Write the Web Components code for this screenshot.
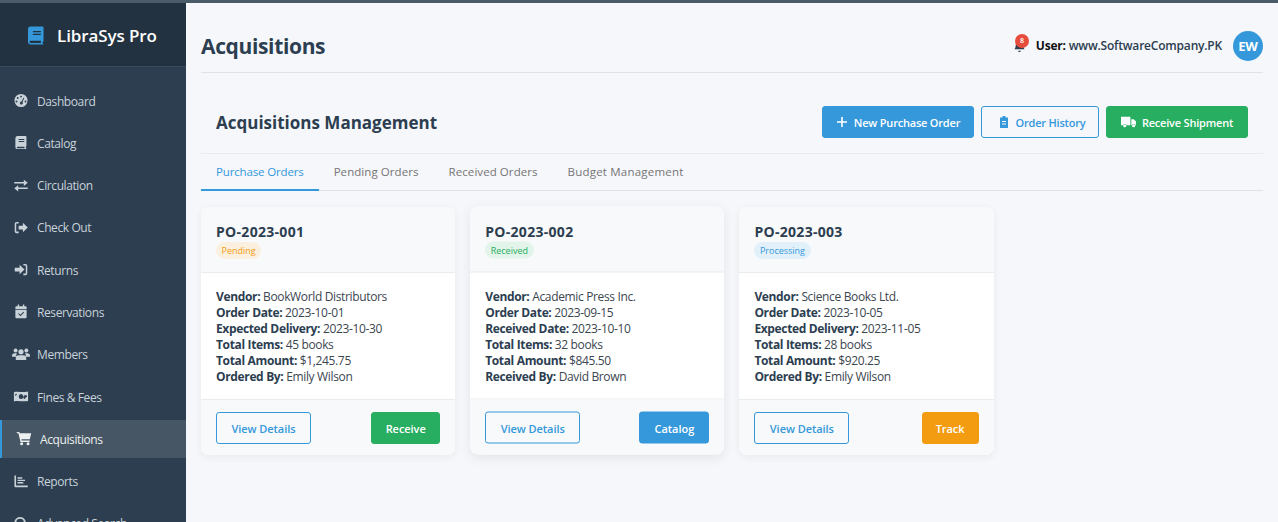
<!DOCTYPE html>
<html>
<head>
<meta charset="utf-8">
<title>LibraSys Pro</title>
<style>
  html, body { margin: 0; height: 522px; overflow: hidden; }
  body { font-family: "Open Sans", "Noto Sans", sans-serif; background: #f5f7fb; color: #2c3e50; }
</style>
</head>
<body>
<app-shell>
  <side-bar slot="side">
    <nav-item icon="gauge">Dashboard</nav-item>
    <nav-item icon="book">Catalog</nav-item>
    <nav-item icon="swap">Circulation</nav-item>
    <nav-item icon="out">Check Out</nav-item>
    <nav-item icon="in">Returns</nav-item>
    <nav-item icon="calendar">Reservations</nav-item>
    <nav-item icon="users">Members</nav-item>
    <nav-item icon="money">Fines &amp; Fees</nav-item>
    <nav-item icon="cart" active>Acquisitions</nav-item>
    <nav-item icon="chart">Reports</nav-item>
    <nav-item icon="search">Advanced Search</nav-item>
  </side-bar>
  <page-head title="Acquisitions"></page-head>
  <section-head></section-head>
  <tab-bar>
    <tab-item active style="letter-spacing:-.15px">Purchase Orders</tab-item>
    <tab-item style="letter-spacing:.07px">Pending Orders</tab-item>
    <tab-item style="letter-spacing:.07px">Received Orders</tab-item>
    <tab-item style="letter-spacing:.2px">Budget Management</tab-item>
  </tab-bar>
  <card-grid>
    <order-card number="PO-2023-001" status="Pending" tone="pending" action="Receive" action-tone="green">
      <order-line label="Vendor">BookWorld Distributors</order-line>
      <order-line label="Order Date">2023-10-01</order-line>
      <order-line label="Expected Delivery">2023-10-30</order-line>
      <order-line label="Total Items">45 books</order-line>
      <order-line label="Total Amount">$1,245.75</order-line>
      <order-line label="Ordered By">Emily Wilson</order-line>
    </order-card>
    <order-card number="PO-2023-002" status="Received" tone="received" action="Catalog" action-tone="blue" lifted>
      <order-line label="Vendor">Academic Press Inc.</order-line>
      <order-line label="Order Date">2023-09-15</order-line>
      <order-line label="Received Date">2023-10-10</order-line>
      <order-line label="Total Items">32 books</order-line>
      <order-line label="Total Amount">$845.50</order-line>
      <order-line label="Received By">David Brown</order-line>
    </order-card>
    <order-card number="PO-2023-003" status="Processing" tone="processing" action="Track" action-tone="orange">
      <order-line label="Vendor">Science Books Ltd.</order-line>
      <order-line label="Order Date">2023-10-05</order-line>
      <order-line label="Expected Delivery">2023-11-05</order-line>
      <order-line label="Total Items">28 books</order-line>
      <order-line label="Total Amount">$920.25</order-line>
      <order-line label="Ordered By">Emily Wilson</order-line>
    </order-card>
  </card-grid>
</app-shell>

<script>
const icons = {
  gauge: '<svg viewBox="0 0 16 16"><path fill-rule="evenodd" d="M8 1a7 7 0 1 1 0 14a7 7 0 0 1 0-14zM8 2.800a1 1 0 1 0 0 2a1 1 0 0 0 0-2zM4.500 4.300a1 1 0 1 0 0 2a1 1 0 0 0 0-2zM3.200 8a1 1 0 1 0 0 2a1 1 0 0 0 0-2zM12.800 8a1 1 0 1 0 0 2a1 1 0 0 0 0-2zM10.600 5L8.500 9.100a1.600 1.600 0 1 0 1.100.5l1.900-4.200z"/></svg>',
  book: '<svg viewBox="0 0 16 16"><path fill-rule="evenodd" d="M4 1h8.800a1 1 0 0 1 1 1v9.500a1 1 0 0 1-.6.9v1.600h.2a.5.5 0 0 1 0 1H4a2 2 0 0 1-2-2V3.500A2.500 2.500 0 0 1 4 1zM5.500 4.200v1h6v-1zM5.500 6.500v1h6v-1zM4 12.500a1 1 0 0 0 0 1.500h7.700v-1.500z"/></svg>',
  swap: '<svg viewBox="0 0 16 16"><path d="M.8 4.200h10.200V1.800l4.200 3.300l-4.200 3.300V5.900H.8zM15.200 10H5V7.700l-4.200 3.300l4.200 3.300v-2.500h10.200z"/></svg>',
  out: '<svg viewBox="0 0 16 16"><path d="M5.500 2H3.300A2 2 0 0 0 1.300 4v8a2 2 0 0 0 2 2h2.200v-1.700H3.300a.4.400 0 0 1-.4-.4V4.100a.4.400 0 0 1 .4-.4h2.200zM10 3L15.200 8L10 13V10H5.500V6H10z"/></svg>',
  in: '<svg viewBox="0 0 16 16"><path d="M10.500 2h2.200a2 2 0 0 1 2 2v8a2 2 0 0 1-2 2h-2.200v-1.700h2.200a.4.400 0 0 0 .4-.4V4.100a.4.400 0 0 0-.4-.4h-2.200zM6.500 3L11.700 8L6.500 13V10H1.300V6h5.200z"/></svg>',
  calendar: '<svg viewBox="0 0 16 16"><path fill-rule="evenodd" d="M4.500.5h1.500v2h4v-2h1.500v2h1.500a1 1 0 0 1 1 1V5.300H2V3.500a1 1 0 0 1 1-1h1.500zM2 6.200h12V14a1.200 1.200 0 0 1-1.200 1.200H3.200A1.200 1.200 0 0 1 2 14zM10.600 8.300l-3.200 3.200L5.600 9.800l-.7.700l2.500 2.500l3.900-3.900z"/></svg>',
  users: '<svg viewBox="0 0 20 16"><circle cx="4" cy="3.500" r="2.200"/><circle cx="16" cy="3.500" r="2.200"/><circle cx="10" cy="5" r="2.900"/><path d="M0 9.500a3 3 0 0 1 3-3h2l.6.5A4 4 0 0 0 4.500 10.500H0zM14.400 7l.6-.5h2a3 3 0 0 1 3 3v1h-4.500a4 4 0 0 0-1.100-3.500zM7 8.800h6a2.800 2.800 0 0 1 2.800 2.800V14H4.200v-2.400A2.800 2.800 0 0 1 7 8.800z"/></svg>',
  money: '<svg viewBox="-1 -1 20 18"><path fill-rule="evenodd" d="M.5 2.800c4-1.500 9 1 17-.7v11.200c-6 1.500-12-1-17 .7zM9 5a2.700 3 0 1 0 0 6a2.700 3 0 0 0 0-6zM2.800 4.800a1.500 1.500 0 0 1-1 1v1.400a2.500 2.500 0 0 0 2.400-2.200zM13.800 11a2.500 2.500 0 0 1 2.400-2.300V7.300a2.500 2.500 0 0 0-3.800 3.500z"/></svg>',
  cart: '<svg viewBox="0 0 16 16"><path d="M.3 1h2.700l.4 1.500H15.700l-1.500 6.300H5.200l.3 1.400h8.500v1.400H4.300L2 2.300H.3z"/><circle cx="5.500" cy="13.700" r="1.600"/><circle cx="12.300" cy="13.700" r="1.600"/></svg>',
  chart: '<svg viewBox="0 0 16 16"><path d="M1 1.500h1.700v10.800h12.500V14H2a1 1 0 0 1-1-1zM4.300 3.500h5V5h-5zM4.300 6h8v1.500h-8zM4.300 8.500h6.200V10H4.300z"/></svg>',
  search: '<svg viewBox="0 0 16 16"><path fill-rule="evenodd" d="M7 1a6 6 0 0 1 4.800 9.600l3.400 3.400l-1.300 1.300l-3.400-3.400A6 6 0 1 1 7 1zM7 3a4 4 0 1 0 0 8a4 4 0 0 0 0-8z"/></svg>'
};

function define(name, css, html) {
  customElements.define(name, class extends HTMLElement {
    connectedCallback() {
      if (this.shadowRoot) return;
      const root = this.attachShadow({ mode: 'open' });
      root.innerHTML = `<style>${css}</style>${typeof html === 'function' ? html(this) : html}`;
    }
  });
}

define('app-shell', `
  :host { display: block; height: 522px; overflow: hidden; }
  .strip { height: 3px; background: #4a5c68; }
  .wrap { display: flex; height: 519px; }
  .side { width: 186px; flex: none; height: 519px; overflow: hidden; }
  main { flex: 1; min-width: 0; padding: 0 15px; }
`, `<div class="strip"></div><div class="wrap"><div class="side"><slot name="side"></slot></div><main><slot></slot></main></div>`);

define('side-bar', `
  :host { display: block; background: #2c3e50; height: 100%; color: #ecf0f1; }
  .brand { height: 64px; box-sizing: border-box; background: #233240; border-bottom: 1px solid #384a5b; display: flex; align-items: center; padding: 2px 0 0 28px; gap: 13px; }
  .brand svg { width: 16px; height: 19px; fill: #3498db; }
  .brand span { font-size: 17px; font-weight: 600; color: #fff; letter-spacing: -.1px; }
  nav { padding-top: 15px; display: flex; flex-direction: column; gap: 4.300px; }
`, `<div class="brand"><svg viewBox="0 0 18 20"><path fill-rule="evenodd" d="M3 0h13a1.500 1.500 0 0 1 1.500 1.500v14.500a1.500 1.500 0 0 1-1 1.400v1.600h.3a.5.500 0 0 1 0 1H3a3 3 0 0 1-3-3V3a3 3 0 0 1 3-3zM5.500 5v1.300h9V5zM5.500 8v1.300h9V8zM3 16a1 1 0 0 0 0 2.500h11.500V16z"/></svg><span>LibraSys Pro</span></div><nav><slot></slot></nav>`);

define('nav-item', `
  :host { display: flex; align-items: center; height: 38px; box-sizing: border-box; padding-left: 13px; font-size: 12px; letter-spacing: -.4px; color: #c9d2d9; }
  :host([active]) { background: #465664; border-left: 2px solid #3498db; padding-left: 14px; color: #ecf0f1; }
  svg { width: 18px; height: 15px; fill: currentColor; flex: none; margin: -1px 7.500px 0 -1.500px; }
`, el => `${icons[el.getAttribute('icon')] || ''}<slot></slot>`);

define('page-head', `
  :host { display: flex; align-items: center; justify-content: space-between; height: 70px; box-sizing: border-box; padding-top: 16px; border-bottom: 1px solid #dfe3e8; margin-bottom: 18px; }
  h1 { margin: 0; font-size: 21px; font-weight: 700; color: #2c3e50; letter-spacing: -.35px; }
  .user { display: flex; align-items: center; gap: 8px; font-size: 12px; color: #2c3e50; font-weight: 600; letter-spacing: -.2px; }
  b { color: #111; font-weight: 700; }
  .bell { position: relative; width: 14px; height: 14px; margin-right: 1px; }
  .bell svg { width: 13px; height: 13px; fill: #2c3e50; display: block; margin-top: 1px; }
  .dot { position: absolute; top: -5px; right: -2px; width: 14px; height: 14px; border-radius: 50%; background: #e74c3c; color: #fff; font-size: 7px; display: flex; align-items: center; justify-content: center; }
  .avatar { width: 30px; height: 30px; border-radius: 50%; background: #3498db; color: #fff; font-weight: 700; font-size: 13px; display: flex; align-items: center; justify-content: center; margin-left: 3px; }
`, el => `<h1>${el.getAttribute('title')}</h1><div class="user"><span class="bell"><svg viewBox="0 0 12 14"><path d="M6 1a4 4 0 0 1 4 4c0 3 1 4 1.500 5H.5C1 9 2 8 2 5a4 4 0 0 1 4-4zM4.500 11.500h3a1.500 1.500 0 0 1-3 0z"/></svg><span class="dot">8</span></span><span><b>User:</b> www.SoftwareCompany.PK</span><span class="avatar">EW</span></div>`);

define('section-head', `
  :host { display: flex; align-items: center; justify-content: space-between; padding: 15px 15px 15px; border-bottom: 1px solid #e9ecef; }
  h2 { margin: 0; font-size: 17px; font-weight: 700; color: #2c3e50; }
  .acts { display: flex; gap: 7px; }
  button { font: inherit; height: 32px; border-radius: 3px; font-size: 11px; font-weight: 600; display: inline-flex; align-items: center; justify-content: center; gap: 6px; border: 1px solid; box-sizing: border-box; letter-spacing: -.2px; }
  svg { width: 12px; height: 12px; fill: currentColor; }
  .blue { background: #3498db; color: #fff; border-color: #3498db; width: 152px; }
  .line { background: transparent; color: #3498db; border-color: #3498db; width: 118px; padding-right: 3px; }
  .green { background: #27ae60; color: #fff; border-color: #27ae60; width: 142px; }
  .green svg { width: 15px; }
`, `<h2>Acquisitions Management</h2><div class="acts">
  <button class="blue"><svg viewBox="0 0 12 12"><path d="M5.200 1h1.600v4.200H11v1.600H6.800V11H5.200V6.800H1V5.200h4.200z"/></svg>New Purchase Order</button>
  <button class="line"><svg viewBox="0 0 12 12"><path fill-rule="evenodd" d="M4.300 1.500a1.700 1.700 0 0 1 3.400 0H10v10.500H2V1.500zM4 5v1h4V5zM4 7.500v1h4v-1z"/></svg>Order History</button>
  <button class="green"><svg viewBox="0 0 16 12"><path d="M0 .5h10v9H6a2 2 0 0 0-3.800 0H0zM11 3h2.500L16 5.500v4h-.5a2 2 0 0 0-3.800 0H11z"/><circle cx="4" cy="10" r="1.700"/><circle cx="13.500" cy="10" r="1.700"/></svg>Receive Shipment</button>
</div>`);

define('tab-bar', `
  :host { display: flex; height: 37px; box-sizing: border-box; border-bottom: 1px solid #dfe3e8; margin-bottom: 16px; }
`, `<slot></slot>`);

define('tab-item', `
  :host { display: flex; align-items: center; height: 37px; box-sizing: border-box; padding: 0 15px; border-bottom: 2px solid transparent; font-size: 11.500px; font-weight: 500; color: #757575; }
  :host([active]) { color: #3498db; border-bottom-color: #3498db; }
`, `<slot></slot>`);

define('card-grid', `
  :host { display: flex; gap: 15px; }
`, `<slot></slot>`);

define('order-card', `
  :host { display: block; width: 254.200px; height: 248px; border-radius: 8px; background: #fff; overflow: hidden; box-shadow: 0 2px 8px rgba(0,0,0,.06); }
  :host([lifted]) { transform: translateY(-0.5px); box-shadow: 0 3px 12px rgba(0,0,0,.08); }
  header { height: 66px; box-sizing: border-box; padding: 16px 15px 0; background: #f8f9fa; border-bottom: 1px solid #e9ecef; }
  h3 { margin: 0; font-size: 14px; font-weight: 700; line-height: 18px; color: #2c3e50; letter-spacing: .3px; }
  .pill { display: block; width: fit-content; margin-top: 1px; padding: 0 5.500px; height: 17px; line-height: 17px; border-radius: 9px; font-size: 9px; }
  .pending { background: #fbf0e0; color: #f39c12; }
  .received { background: #e3f4ea; color: #27ae60; }
  .processing { background: #e2f0fa; color: #3498db; }
  .body { height: 127px; box-sizing: border-box; padding: 16px 15px 0; border-bottom: 1px solid #e9ecef; }
  footer { height: 55px; box-sizing: border-box; background: #f8f9fa; padding: 12px 15px 0; display: flex; justify-content: space-between; }
  button { font: inherit; height: 32px; border-radius: 3px; font-size: 11px; font-weight: 600; box-sizing: border-box; border: 1px solid; padding: 0; letter-spacing: -.05px; }
  .view { width: 95px; background: transparent; color: #3498db; border-color: #3498db; }
  .green, .blue, .orange { width: 69px; color: #fff; }
  .green { background: #27ae60; border-color: #27ae60; }
  .blue { background: #3498db; border-color: #3498db; width: 70px; }
  .orange { background: #f39c12; border-color: #f39c12; width: 57px; }
`, el => `<header><h3>${el.getAttribute('number')}</h3><span class="pill ${el.getAttribute('tone')}">${el.getAttribute('status')}</span></header>
  <div class="body"><slot></slot></div>
  <footer><button class="view">View Details</button><button class="${el.getAttribute('action-tone')}">${el.getAttribute('action')}</button></footer>`);

define('order-line', `
  :host { display: block; font-size: 12px; line-height: 16px; color: #3b4650; white-space: nowrap; letter-spacing: -.35px; }
  b { font-weight: 700; color: #2c3e50; }
`, el => `<b>${el.getAttribute('label')}:</b> <slot></slot>`);
</script>
</body>
</html>
